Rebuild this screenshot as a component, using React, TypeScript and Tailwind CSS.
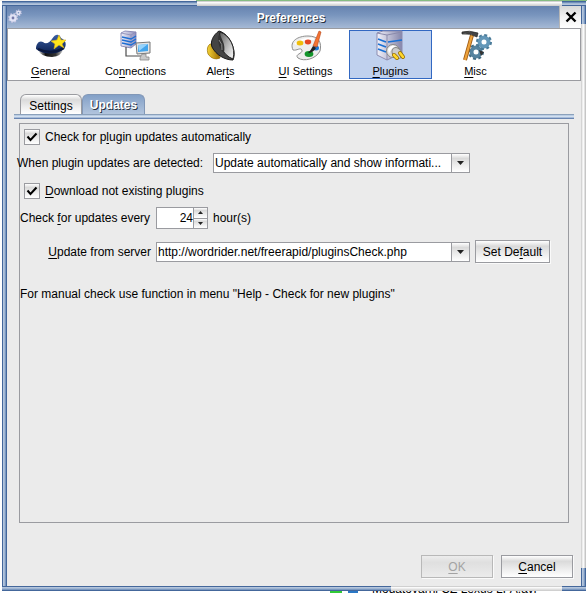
import { useState } from 'react';
import type { ReactNode } from 'react';

const frameBlueX = 'bg-[linear-gradient(90deg,#44679b_0_1px,#b4c5dc_1px_2px,#a3b8d4_2px_3px,#7b98c0_3px_4px,#44679b_4px)]';
const frameBlueY = 'bg-[linear-gradient(180deg,#44679b_0_1px,#b4c5dc_1px_2px,#9fb5d2_2px_3px,#7b98c0_3px_4px,#44679b_4px)]';
const frameTop = 'bg-[linear-gradient(180deg,#44679b_0_1px,#7190ba_1px_2px,#a3b8d4_2px_3px,#b4c5dc_3px_4px,#44679b_4px)]';
const framePaleX = 'bg-[linear-gradient(90deg,#d4d4d4_0_1px,#ededed_1px_2px,#fafafa_2px_3px,#e1e1e1_3px_4px,#c6c6c6_4px)]';
const framePaleY = 'bg-[linear-gradient(180deg,#d0d0d0_0_1px,#fafafa_1px_2px,#ededed_2px_3px,#dedede_3px_4px,#d0d0d0_4px)]';
const face = 'bg-[linear-gradient(180deg,#ffffff_0%,#dadada_25%,#ececec_60%,#ffffff_100%)]';
const glow = '[text-shadow:1px_1px_0_#26303e]';

function Key({ children }: { children: ReactNode }) {
  return <span className="underline underline-offset-2">{children}</span>;
}

function GeneralIcon() {
  return (
    <svg className="-mt-px shrink-0" width="32" height="32" viewBox="0 0 32 32" aria-hidden="true">
      <defs>
        <linearGradient id="cap" x1="0" y1="0" x2="0" y2="1">
          <stop offset="0" stopColor="#3a5fa5" /><stop offset="1" stopColor="#0b1e50" />
        </linearGradient>
        <linearGradient id="brim" x1="0" x2="1">
          <stop offset="0" stopColor="#f4f4f4" /><stop offset=".3" stopColor="#111" /><stop offset=".7" stopColor="#333" /><stop offset="1" stopColor="#ccc" />
        </linearGradient>
      </defs>
      <path d="M3 20 Q6 27 17 27 Q27 26 28 19 L17 22Z" fill="url(#brim)" />
      <path d="M1 19 C1 14 4 10 8 12 C11 15 15 12 17 9 C20 4 24 3 26 8 C31 10 32 15 29 19 C22 25 8 25 1 19Z" fill="url(#cap)" />
      <path d="M3 19 Q16 25 29 18" fill="none" stroke="#0a173b" strokeWidth="2" />
      <path d="M24 5 L26 10 L31 10 L27 14 L29 18 L24 15 L19 19 L20 14 L16 11 L22 10Z" fill="#ffe51b" stroke="#e3b81b" strokeWidth=".6" />
    </svg>
  );
}

function ConnectionsIcon() {
  return (
    <svg className="-mt-px shrink-0" width="32" height="32" viewBox="0 0 32 32" aria-hidden="true">
      <defs>
        <linearGradient id="tower" x1="0" x2="1"><stop offset="0" stopColor="#eeeef8" /><stop offset="1" stopColor="#8e8ebd" /></linearGradient>
      </defs>
      <path d="M1 3 L5 1 L16 2 L16 14 L11 18 L1 16Z" fill="url(#tower)" stroke="#7a7aac" strokeWidth=".8" />
      <path d="M1 3 L11 5 L16 2 M11 5 V18" stroke="#8b8bb5" fill="none" strokeWidth=".8" />
      <path d="M2 7 L11 9 L16 6 M2 10 L11 12 L16 9 M2 13 L11 15 L16 12" stroke="#1d6fd4" strokeWidth="1.3" fill="none" />
      <path d="M6 17 V26 H21" fill="none" stroke="#4c4c4c" strokeWidth="1.2" />
      <path d="M16 13 L30 12 V23 L17 24Z" fill="#e4e4e4" stroke="#777" />
      <path d="M18 15 L28 14 V21 L18 22Z" fill="#43a5ec" />
      <path d="M18 15 L28 14 L19 21Z" fill="#95d3fc" />
      <path d="M22 24 H26 V27 H29 V30 H20 V28Z" fill="#c9c9c9" stroke="#888" strokeWidth=".8" />
    </svg>
  );
}

function AlertsIcon() {
  return (
    <svg className="-mt-px shrink-0" width="32" height="32" viewBox="0 0 32 32" aria-hidden="true">
      <defs>
        <linearGradient id="brass"><stop offset="0" stopColor="#f6d437" /><stop offset="1" stopColor="#9b6a00" /></linearGradient>
        <linearGradient id="cone" x1="0" x2="1" y1="0" y2="1"><stop offset="0" stopColor="#555" /><stop offset=".45" stopColor="#aaa" /><stop offset="1" stopColor="#fff" /></linearGradient>
      </defs>
      <path d="M5 14 Q1 17 3 24 Q8 31 15 28 L12 15Z" fill="url(#brass)" stroke="#997000" strokeWidth=".7" />
      <path d="M14 1 C8 5 5 12 7 17 C11 25 20 30 28 30 C32 21 25 4 14 1Z" fill="#444" stroke="#181818" />
      <path d="M15 2 C12 12 17 25 28 29 C31 18 25 5 15 2Z" fill="url(#cone)" stroke="#222" />
      <path d="M15 3 C16 10 21 13 19 23 C13 18 12 9 15 3Z" fill="#333" />
      <path d="M14 10 Q18 14 17 20" stroke="#8b8b8b" fill="none" />
    </svg>
  );
}

function PaletteIcon() {
  return (
    <svg className="-mt-px shrink-0" width="32" height="32" viewBox="0 0 32 32" aria-hidden="true">
      <path d="M3 20 C-1 11 8 6 18 6 C29 6 32 13 30 21 C26 29 14 32 8 28 C4 24 13 24 12 20 C10 17 7 21 3 20Z" fill="#eee" stroke="#8e8e8e" />
      <path d="M5 14 Q13 8 24 9" stroke="#fff" strokeWidth="2" fill="none" />
      <ellipse cx="10" cy="13" rx="3.4" ry="2.5" fill="#efbd0b" />
      <ellipse cx="18" cy="12" rx="3.2" ry="2.4" fill="#e54623" />
      <ellipse cx="26" cy="18" rx="3" ry="2.5" fill="#1976d5" />
      <ellipse cx="19" cy="24" rx="4.4" ry="3" fill="#12942b" />
      <path d="M29 1 L31 2 L27 17 L23 16Z" fill="#f47332" stroke="#b64316" strokeWidth=".6" />
      <path d="M23 16 L26 18 Q23 23 18 23 Q21 20 23 16Z" fill="#222" />
    </svg>
  );
}

function PluginsIcon() {
  return (
    <svg className="-mt-px shrink-0" width="32" height="32" viewBox="0 0 32 32" aria-hidden="true">
      <defs>
        <linearGradient id="box" x1="0" x2="1"><stop offset="0" stopColor="#f2f2fb" /><stop offset="1" stopColor="#8585aa" /></linearGradient>
      </defs>
      <path d="M2 3 L8 1 L27 1 V23 L12 30 L2 25Z" fill="url(#box)" stroke="#8c8cb0" />
      <path d="M2 3 L12 5 L27 2 M12 5 V30" fill="none" stroke="#8b8bac" />
      <path d="M3 9 L11 12 M3 14 L11 17 M3 19 L11 22 M13 12 L27 10" stroke="#1970d4" strokeWidth="1.6" />
      <circle cx="18" cy="21" r="6.5" fill="#ddd" stroke="#888" />
      <path d="M13 19 Q17 13 21 17 Q15 19 14 24" fill="#fff" />
      <ellipse cx="22" cy="23" rx="4.5" ry="6" transform="rotate(-35 22 23)" fill="#ccc" stroke="#888" />
      <path d="M19 25 L22 28 M25 23 L28 27" stroke="#8d6700" strokeWidth="4" strokeLinecap="round" />
      <path d="M19 25 L22 28 M25 23 L28 27" stroke="#ffd72c" strokeWidth="2.6" strokeLinecap="round" />
    </svg>
  );
}

function MiscIcon() {
  return (
    <svg className="-mt-px shrink-0" width="32" height="32" viewBox="0 0 32 32" aria-hidden="true">
      <circle cx="16" cy="22" r="4.5" fill="none" stroke="#55839f" strokeWidth="4" />
      <circle cx="16" cy="22" r="7" fill="none" stroke="#416b83" strokeWidth="2" strokeDasharray="3 2.5" />
      <circle cx="24" cy="12" r="4.5" fill="none" stroke="#6397b8" strokeWidth="4" />
      <circle cx="24" cy="12" r="7" fill="none" stroke="#4b7c9a" strokeWidth="2" strokeDasharray="3 2.5" />
      <path d="M19 20 L24 22 L21 26Z" fill="#333" />
      <path d="M12 5 L5 30" stroke="#9f5a12" strokeWidth="4" />
      <path d="M12 5 L5 30" stroke="#eea33c" strokeWidth="2.3" />
      <path d="M2 2 Q9 0 18 3 L17 7 Q10 3 2 4Z" fill="#444" stroke="#222" strokeWidth=".7" />
    </svg>
  );
}

const sections: { name: string; label: ReactNode; icon: ReactNode }[] = [
  { name: 'general', label: <><Key>G</Key>eneral</>, icon: <GeneralIcon /> },
  { name: 'connections', label: <>Co<Key>n</Key>nections</>, icon: <ConnectionsIcon /> },
  { name: 'alerts', label: <>Aler<Key>t</Key>s</>, icon: <AlertsIcon /> },
  { name: 'ui', label: <><Key>U</Key>I Settings</>, icon: <PaletteIcon /> },
  { name: 'plugins', label: <><Key>P</Key>lugins</>, icon: <PluginsIcon /> },
  { name: 'misc', label: <><Key>M</Key>isc</>, icon: <MiscIcon /> },
];

function GearsIcon() {
  return (
    <svg width="14" height="14" viewBox="0 0 14 14" aria-hidden="true">
      <circle cx="5" cy="9" r="4.2" fill="none" stroke="#c3c3e0" strokeWidth="1.6" strokeDasharray="1.7 1.6" />
      <circle cx="5" cy="9" r="2.6" fill="none" stroke="#e2e2f4" strokeWidth="2.4" />
      <circle cx="10.5" cy="3.8" r="2.7" fill="none" stroke="#c3c3e0" strokeWidth="1.3" strokeDasharray="1.3 1.1" />
      <circle cx="10.5" cy="3.8" r="1.6" fill="none" stroke="#e2e2f4" strokeWidth="1.6" />
      <circle cx="5" cy="9" r="1.2" fill="#7777a8" />
    </svg>
  );
}

function Arrow({ small, up }: { small?: boolean; up?: boolean }) {
  const size = small ? 5 : 7;
  return (
    <svg width={size} height={small ? 3 : 4} viewBox="0 0 8 4" preserveAspectRatio="none" aria-hidden="true">
      <path d={up ? 'M0 4 L4 0 L8 4Z' : 'M0 0 H8 L4 4Z'} fill="#222" />
    </svg>
  );
}

function Check({ id, children }: { id: string; children: ReactNode }) {
  return (
    <div className="flex h-4 items-center gap-[5px] pl-1">
      <span className="relative size-4">
        <input id={id} type="checkbox" defaultChecked className={`peer block size-4 appearance-none border border-[#9a9ba0] ${face}`} />
        <svg className="pointer-events-none absolute inset-0 hidden peer-checked:block" width="16" height="16" viewBox="0 0 16 16" aria-hidden="true">
          <path d="M3.5 7.5 L6.5 11 L12.5 4.5" fill="none" stroke="#000" strokeWidth="2" />
        </svg>
      </span>
      <label htmlFor={id}>{children}</label>
    </div>
  );
}

const button = `h-[23px] border border-[#9a9ba0] shadow-[1px_1px_0_#fafafa] ${face}`;

export default function App() {
  const [section, setSection] = useState('plugins');
  const [hours, setHours] = useState(24);
  return (
    <div className="flex min-h-screen flex-col bg-white font-['Liberation_Sans',Arial,sans-serif] text-xs text-black">
      <div className="flex h-px"><span className="w-1/3 bg-[#f2f2f2]" /><span className="flex-1 bg-[#86bd83]" /></div>
      <main className="mr-px ml-0.5 flex flex-1 flex-col">
        <div className="flex h-[5px]">
          <span className={`w-1/3 ${frameTop}`} />
          <span className={`flex-1 ${framePaleY}`} />
          <span className={`w-6 ${frameTop}`} />
        </div>
        <div className="flex flex-1">
          <span className={`w-[5px] ${frameBlueX}`} />
          <div className="flex min-w-0 flex-1 flex-col bg-[#ebebeb]">
            <header className="flex h-[22px] bg-[linear-gradient(180deg,#6683af,#7894bd_40%,#a5b9d5)]">
              <span className="w-[22px] pt-[3px] pl-px"><GearsIcon /></span>
              <h1 className={`flex-1 pt-1 pr-1.5 text-center font-bold leading-4 text-white ${glow}`}>Preferences</h1>
              <button aria-label="Close" className="flex w-[22px] items-center justify-center border-l border-[#b6b6b6] bg-[linear-gradient(180deg,#d8d8d8,#f2f2f2_50%,#ffffff)]">
                <svg width="12" height="12" viewBox="0 0 12 12" aria-hidden="true"><path d="M1.5 1.5 L10.5 10.5 M10.5 1.5 L1.5 10.5" stroke="#000" strokeWidth="2.4" /></svg>
              </button>
            </header>
            <nav className="flex h-[53px] gap-0.5 border border-[#9a9ba0] bg-white px-px py-px">
              {sections.map((s) => (
                <button
                  key={s.name}
                  onClick={() => setSection(s.name)}
                  className={`flex w-[83px] flex-col items-center border text-[11px] leading-4 ${section === s.name ? 'border-[#3268c2] bg-[#c0d1ee]' : 'border-transparent'}`}
                >
                  {s.icon}
                  <span className="pt-px">{s.label}</span>
                </button>
              ))}
            </nav>
            <div className="flex flex-1 flex-col px-[7px] pt-[13px]">
              <div role="tablist" className="flex h-5 pl-1.5">
                <button role="tab" aria-selected="false" className={`w-[62px] rounded-t-md border border-b-0 border-[#9a9ba0] pt-0.5 ${face}`}>Settings</button>
                <button role="tab" aria-selected="true" className={`w-[63px] rounded-t-md border border-b-0 border-[#8197b7] bg-[linear-gradient(180deg,#83a0c7,#b1c4dd)] font-bold text-white ${glow}`}>Updates</button>
              </div>
              <div className="h-[5px] bg-[linear-gradient(180deg,#8ba1bb_0_1px,#bacde4_1px_2px,#d3e0ef_2px_3px,#a8bdda_3px_4px,#6985b1_4px)]" />
              <section role="tabpanel" aria-label="Updates" className="mx-[5px] mt-1 flex-1 border border-[#9a9ba0] pt-[5px]">
                <Check id="auto">Check for p<Key>l</Key>ugin updates automatically</Check>
                <div className="mt-2 flex h-5 items-center">
                  <label htmlFor="action" className="-ml-[3px] w-[196px] whitespace-nowrap">When plugin updates are detected:</label>
                  <div className="relative h-5 w-[257px]">
                    <select id="action" className="block h-5 w-full appearance-none border border-[#9a9ba0] bg-white pl-px">
                      <option>Update automatically and show informati...</option>
                    </select>
                    <span className={`pointer-events-none absolute inset-y-px right-px flex w-[18px] items-center justify-center border-l border-[#9a9ba0] ${face}`}><Arrow /></span>
                  </div>
                </div>
                <div className="mt-2.5"><Check id="missing"><Key>D</Key>ownload not existing plugins</Check></div>
                <div className="mt-2 flex h-[22px] items-center">
                  <label htmlFor="hours" className="w-[136px] whitespace-nowrap">Check <Key>f</Key>or updates every</label>
                  <div className="flex h-[22px] w-[52px] border border-[#9a9ba0] bg-white">
                    <input id="hours" value={hours} onChange={(e) => setHours(Number(e.target.value) || 0)} className="w-9 min-w-0 text-right" />
                    <div className="flex flex-1 flex-col border-l border-[#9a9ba0]">
                      <button aria-label="More" onClick={() => setHours(hours + 1)} className={`flex flex-1 items-center justify-center ${face}`}><Arrow small up /></button>
                      <button aria-label="Fewer" onClick={() => setHours(hours - 1)} className={`flex flex-1 items-center justify-center border-t border-[#9a9ba0] ${face}`}><Arrow small /></button>
                    </div>
                  </div>
                  <span className="pl-[5px]">hour(s)</span>
                </div>
                <div className="mt-[11px] flex h-[23px] items-center">
                  <label htmlFor="server" className="w-[136px] pr-[5px] text-right whitespace-nowrap"><Key>U</Key>pdate from server</label>
                  <div className="flex h-5 w-[314px] border border-[#9a9ba0] bg-white">
                    <input id="server" defaultValue="http://wordrider.net/freerapid/pluginsCheck.php" className="min-w-0 flex-1 pl-px" />
                    <button aria-label="Show servers" className={`flex w-[18px] items-center justify-center border-l border-[#9a9ba0] ${face}`}><Arrow /></button>
                  </div>
                  <button className={`ml-[5px] w-[75px] ${button}`}>Set De<Key>f</Key>ault</button>
                </div>
                <p className="mt-[23px] leading-4">For manual check use function in menu "Help - Check for new plugins"</p>
              </section>
              <footer className="flex justify-end gap-2 pt-8 pr-px pb-2">
                <button disabled className="h-[23px] w-[72px] border border-[#b8b8b8] bg-[linear-gradient(180deg,#ededed,#dfdfdf_30%,#ebebeb)] text-[#a3a3a3] shadow-[1px_1px_0_#fafafa]"><Key>O</Key>K</button>
                <button className={`w-[72px] ${button}`}><Key>C</Key>ancel</button>
              </footer>
            </div>
          </div>
          <div className="flex w-[5px] flex-col">
            <span className={`h-[18px] ${frameBlueX}`} />
            <span className={`flex-1 ${framePaleX}`} />
            <span className={`h-[18px] ${frameBlueX}`} />
          </div>
        </div>
        <div className="flex h-[5px]">
          <span className={`w-2/3 ${frameBlueY}`} />
          <span className={`flex-1 ${framePaleY}`} />
          <span className={`w-6 ${frameBlueY}`} />
        </div>
      </main>
      <div className="flex h-0.5 items-end gap-1.5 overflow-hidden pl-[330px]">
        <span className="h-0.5 w-3 bg-[#32cb37]" />
        <span className="h-0.5 w-2.5 bg-[#2b78c6]" />
        <span className="h-2.5 pl-2 leading-3 whitespace-nowrap">Modatovarni CZ Lexus LPA.avi</span>
      </div>
    </div>
  );
}
